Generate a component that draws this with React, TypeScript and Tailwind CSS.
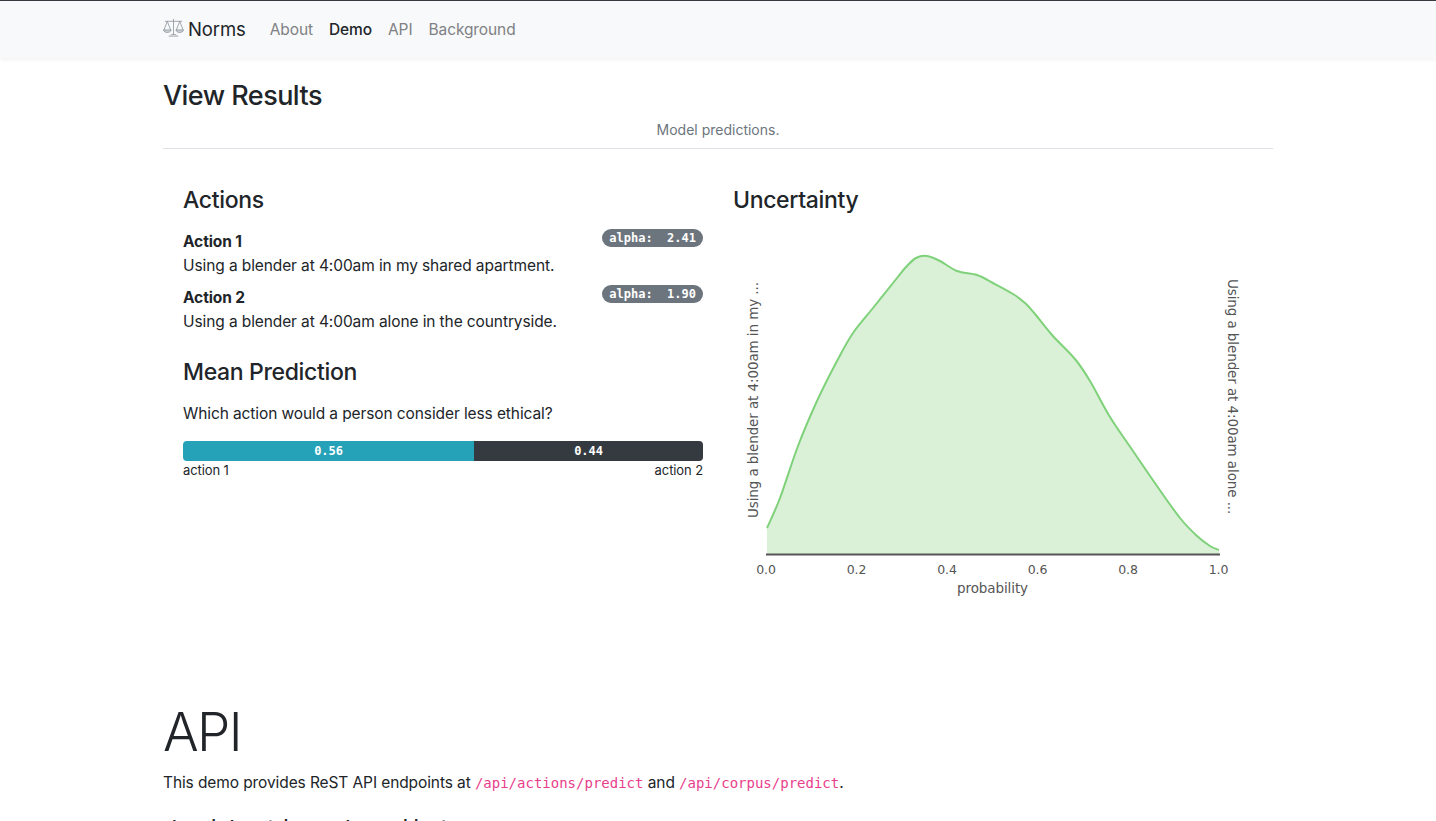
import React from 'react';

const sans = "font-['Inter','Noto_Sans',sans-serif]";
const mono = "font-['DejaVu_Sans_Mono','Liberation_Mono',monospace]";

// density curve traced from the plot, in page coordinates (see the viewBox on the chart)
const points: [number, number][] = [
  [767, 527], [780, 497], [798, 445], [817, 400], [837, 360], [853, 332], [873, 307], [897, 277],
  [906, 266], [916, 257], [927, 255], [940, 260], [957, 270], [977, 274], [993, 282], [1013, 293], [1025, 302],
  [1035, 313], [1053, 335], [1075, 358], [1090, 380], [1110, 416], [1133, 450], [1157, 485],
  [1180, 517], [1197, 535], [1210, 545], [1219, 549],
];

function smoothPath(pts: [number, number][]) {
  let d = `M${pts[0][0]} ${pts[0][1]}`;
  for (let i = 0; i < pts.length - 1; i++) {
    const p0 = pts[Math.max(i - 1, 0)];
    const p1 = pts[i];
    const p2 = pts[i + 1];
    const p3 = pts[Math.min(i + 2, pts.length - 1)];
    const c1x = p1[0] + (p2[0] - p0[0]) / 6;
    const c1y = p1[1] + (p2[1] - p0[1]) / 6;
    const c2x = p2[0] - (p3[0] - p1[0]) / 6;
    const c2y = p2[1] - (p3[1] - p1[1]) / 6;
    d += ` C${c1x} ${c1y} ${c2x} ${c2y} ${p2[0]} ${p2[1]}`;
  }
  return d;
}

const curve = smoothPath(points);

function ScaleIcon() {
  return (
    <svg width="21" height="20" viewBox="0 0 22 20" fill="none" stroke="#868e96" strokeWidth="0.8" className="mr-1 mb-1">
      <path d="M11 0.5 V17 M2 3 H20 M6 18.5 H16 M8 17.5 C9 16.5 13 16.5 14 17.5" />
      <path d="M4.5 3 L1 12 M4.5 3 L8 12 M17.5 3 L14 12 M17.5 3 L21 12" />
      <path d="M0.5 12 H8.5 C8 15.5 1 15.5 0.5 12 Z M13.5 12 H21.5 C21 15.5 14 15.5 13.5 12 Z" fill="#ced4da" />
    </svg>
  );
}

function Action({ title, text, alpha }: { title: string; text: string; alpha: string }) {
  return (
    <div className="flex justify-between items-start mb-2">
      <div>
        <div className="font-bold leading-6">{title}</div>
        <div className="leading-6">{text}</div>
      </div>
      <span className={`${mono} -mt-px bg-[#6c757d] text-white text-[12px] tracking-normal font-bold leading-[12px] rounded-full px-[7px] py-[3px] whitespace-pre`}>
        alpha:  {alpha}
      </span>
    </div>
  );
}

function Chart() {
  const ticks = ['0.0', '0.2', '0.4', '0.6', '0.8', '1.0'];
  return (
    <svg width="520" height="370" viewBox="733 228 520 370" className="block mt-[14px]">
      <path d={`${curve} L1219 554 L767 554 Z`} fill="#daf1d8" />
      <path d={curve} fill="none" stroke="#7fd17a" strokeWidth="2" />
      <line x1="766" y1="553.5" x2="1220" y2="553.5" stroke="#555555" strokeWidth="2" />
      <g fill="#555555" fontFamily="DejaVu Sans" fontSize="12.5">
        {ticks.map((tick, i) => (
          <text key={tick} x={766 + i * 90.5} y="573" textAnchor="middle">
            {tick}
          </text>
        ))}
        <text x="992.5" y="592" textAnchor="middle" fontSize="13.5">
          probability
        </text>
        <text transform="translate(758 517) rotate(-90)" fontSize="13.5">
          Using a blender at 4:00am in my ...
        </text>
        <text transform="translate(1228 278) rotate(90)" fontSize="13.5">
          Using a blender at 4:00am alone ...
        </text>
      </g>
    </svg>
  );
}

export default function App() {
  return (
    <div className={`${sans} h-[821px] overflow-hidden bg-white text-[#212529] text-[15.5px] tracking-[-0.1px]`}>
      <nav className="h-[58px] bg-[#f8f9fa] border-t border-[#343a40] shadow-[0_2px_4px_rgba(0,0,0,0.05)]">
        <div className="w-[1110px] mx-auto h-full flex items-center">
          <ScaleIcon />
          <span className="text-[18.5px] mr-6">Norms</span>
          <div className="flex gap-4">
            <span className="text-[#7f8184]">About</span>
            <span className="text-[#212529] font-medium">Demo</span>
            <span className="text-[#7f8184]">API</span>
            <span className="text-[#7f8184]">Background</span>
          </div>
        </div>
      </nav>

      <main className="w-[1110px] mx-auto">
        <h2 className="text-[27px] tracking-[-0.02em] font-medium leading-[34px] mt-[21px]">View Results</h2>
        <p className="text-sm tracking-normal text-[#6c757d] text-center mt-[6px] mb-[8px] leading-[21px]">Model predictions.</p>
        <hr className="border-[#dee2e6]" />

        <div className="flex mt-[36px]">
          <section className="w-[540px] pl-5">
            <h3 className="text-[23px] tracking-[-0.015em] font-medium leading-[30px] mb-[15px]">Actions</h3>
            <Action title="Action 1" text="Using a blender at 4:00am in my shared apartment." alpha="2.41" />
            <Action title="Action 2" text="Using a blender at 4:00am alone in the countryside." alpha="1.90" />
            <h3 className="text-[23px] tracking-[-0.015em] font-medium leading-[30px] mt-[23px] mb-[15px]">Mean Prediction</h3>
            <p className="leading-6 mb-[15px]">Which action would a person consider less ethical?</p>
            <div className={`${mono} flex h-5 rounded-[4px] overflow-hidden text-white text-[12px] font-bold tracking-normal`}>
              <div className="w-[56%] bg-[#26a2b8] flex items-center justify-center">0.56</div>
              <div className="w-[44%] bg-[#343a40] flex items-center justify-center">0.44</div>
            </div>
            <div className="flex justify-between text-[13px] leading-[18px]">
              <span>action 1</span>
              <span>action 2</span>
            </div>
          </section>
          <section className="pl-[30px] w-[570px]">
            <h3 className="text-[23px] tracking-[-0.015em] font-medium leading-[30px]">Uncertainty</h3>
            <Chart />
          </section>
        </div>

        <h1 className="text-[53px] tracking-[-0.03em] font-light leading-[67px] mt-[100px]">API</h1>
        <p className="leading-6 mt-[5px]">
          This demo provides ReST API endpoints at <code className={`${mono} text-[14px] tracking-normal text-[#e83e8c]`}>/api/actions/predict</code> and{' '}
          <code className={`${mono} text-[14px] tracking-normal text-[#e83e8c]`}>/api/corpus/predict</code>.
        </p>
        <h4 className={`${mono} text-2xl tracking-normal leading-[29px] mt-[21px]`}>/api/actions/predict</h4>
      </main>
    </div>
  );
}
